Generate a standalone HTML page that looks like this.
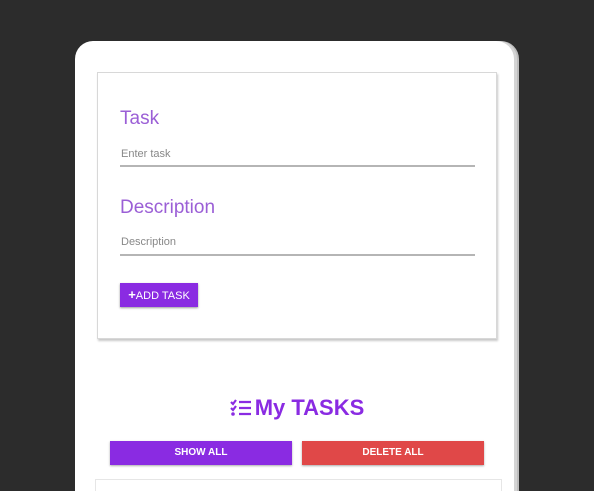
<!DOCTYPE html>
<html><head><style>
html,body{margin:0;padding:0;width:594px;height:491px;overflow:hidden;background:#2c2c2c;font-family:"Liberation Sans",sans-serif;}
.wrap{position:relative;width:594px;height:491px;overflow:hidden;}
.card{position:absolute;left:75px;top:41px;width:439px;height:470px;background:#fff;border-radius:18px;box-shadow:3px 0 0 #d4d4d4,5px 0 0 #bdbdbd;}
.form{position:absolute;left:97px;top:72px;width:398px;height:265px;border:1px solid #d8d8d8;box-shadow:1px 2px 2px #c8c8c8;background:#fff;}
.lbl{position:absolute;left:22px;color:#9b5fd6;font-size:19px;}
.ph{position:absolute;left:23px;color:#888;font-size:11px;}
.line{position:absolute;left:22px;width:355px;height:1px;border-top:2px solid #b5b5b5;}
.add{position:absolute;left:22px;top:210px;width:78px;height:24px;background:#8a2be2;color:#fff;font-size:11px;line-height:24px;text-align:center;box-shadow:0 1px 2px #999;}
.title{position:absolute;left:0;width:594px;top:395px;text-align:center;color:#8a2be2;font-weight:bold;font-size:22px;}
.btn{position:absolute;top:441px;width:182px;height:24px;color:#fff;font-weight:bold;font-size:10px;line-height:24px;text-align:center;box-shadow:0 1px 2px #aaa;}
.list{position:absolute;left:95px;top:479px;width:405px;height:20px;border:1px solid #e6e6e6;background:#fff;}
</style></head><body><div class="wrap">
<div class="card"></div>
<div class="form">
<div class="lbl" style="top:35px">Task</div>
<div class="ph" style="top:75px">Enter task</div>
<div class="line" style="top:92px"></div>
<div class="lbl" style="top:124px">Description</div>
<div class="ph" style="top:163px">Description</div>
<div class="line" style="top:181px"></div>
<div class="add"><b style="font-size:13px">+</b>ADD TASK</div>
</div>
<div class="title"><svg width="22" height="18" viewBox="0 0 22 18" style="vertical-align:-2px;margin-right:3px"><g stroke="#8a2be2" stroke-width="2.2" fill="none"><path d="M1 3l2 2 3-4M1 9l2 2 3-4"/><path d="M9 3h12M9 9h12M9 15h12"/></g><circle cx="3" cy="15" r="1.8" fill="#8a2be2"/></svg>My TASKS</div>
<div class="btn" style="left:110px;background:#8a2be2">SHOW ALL</div>
<div class="btn" style="left:302px;background:#e04848">DELETE ALL</div>
<div class="list"></div>
</div></body></html>
